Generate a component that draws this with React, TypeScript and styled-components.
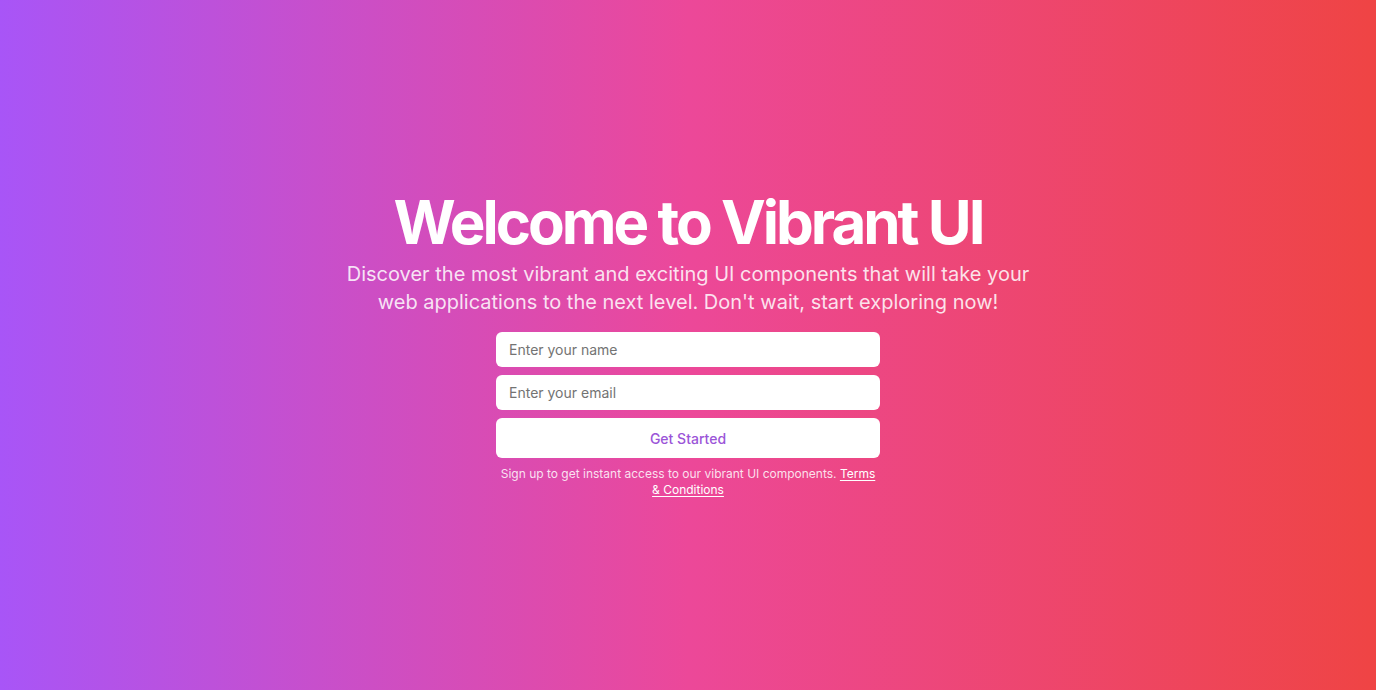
import styled, { createGlobalStyle } from 'styled-components';

const GlobalStyle = createGlobalStyle`
  *, *::before, *::after {
    box-sizing: border-box;
  }
  html, body {
    margin: 0;
    padding: 0;
  }
  body {
    font-family: Inter, 'Noto Sans', sans-serif;
  }
`;

const Hero = styled.section`
  display: flex;
  align-items: center;
  justify-content: center;
  width: 100%;
  height: 690px;
  background: linear-gradient(to right, #a855f7, #ec4899, #ef4444);
  color: #fff;
`;

const Content = styled.div`
  display: flex;
  flex-direction: column;
  align-items: center;
  gap: 16px;
  text-align: center;
`;

const Heading = styled.div`
  display: flex;
  flex-direction: column;
  align-items: center;
  gap: 8px;
`;

const Title = styled.h1`
  margin: 0;
  font-size: 60px;
  line-height: 60px;
  font-weight: 700;
  letter-spacing: -0.05em;
  color: #fff;
`;

const Lead = styled.p`
  margin: 0;
  max-width: 700px;
  font-size: 20px;
  line-height: 28px;
  color: rgba(255, 255, 255, 0.85);
`;

const Form = styled.form`
  display: flex;
  flex-direction: column;
  gap: 8px;
  width: 384px;
`;

const Field = styled.input`
  height: 35px;
  width: 100%;
  padding: 0 13px;
  border: none;
  border-radius: 6px;
  background: #fff;
  font-family: inherit;
  font-size: 14px;
  color: #111827;
  outline: none;

  &::placeholder {
    color: #737373;
  }
`;

const Submit = styled.button`
  height: 40px;
  width: 100%;
  border: none;
  border-radius: 6px;
  background: #fff;
  color: #9b55d8;
  font-family: inherit;
  font-size: 14px;
  font-weight: 500;
  cursor: pointer;
`;

const FormBlock = styled.div`
  display: flex;
  flex-direction: column;
  gap: 8px;
  width: 384px;
`;

const Note = styled.p`
  margin: 0;
  padding: 0 4px;
  font-size: 12px;
  line-height: 16px;
  color: rgba(255, 255, 255, 0.85);
`;

const NoteLink = styled.a`
  color: #fff;
  text-decoration: underline;
  text-underline-offset: 2px;
`;

export default function App() {
  return (
    <>
      <GlobalStyle />
      <Hero>
        <Content>
          <Heading>
            <Title>Welcome to Vibrant UI</Title>
            <Lead>
              Discover the most vibrant and exciting UI components that will take your web
              applications to the next level. Don't wait, start exploring now!
            </Lead>
          </Heading>
          <FormBlock>
            <Form onSubmit={(e) => e.preventDefault()}>
              <Field type="text" placeholder="Enter your name" />
              <Field type="email" placeholder="Enter your email" />
              <Submit type="submit">Get Started</Submit>
            </Form>
            <Note>
              Sign up to get instant access to our vibrant UI components.{' '}
              <NoteLink href="#">Terms &amp; Conditions</NoteLink>
            </Note>
          </FormBlock>
        </Content>
      </Hero>
    </>
  );
}
